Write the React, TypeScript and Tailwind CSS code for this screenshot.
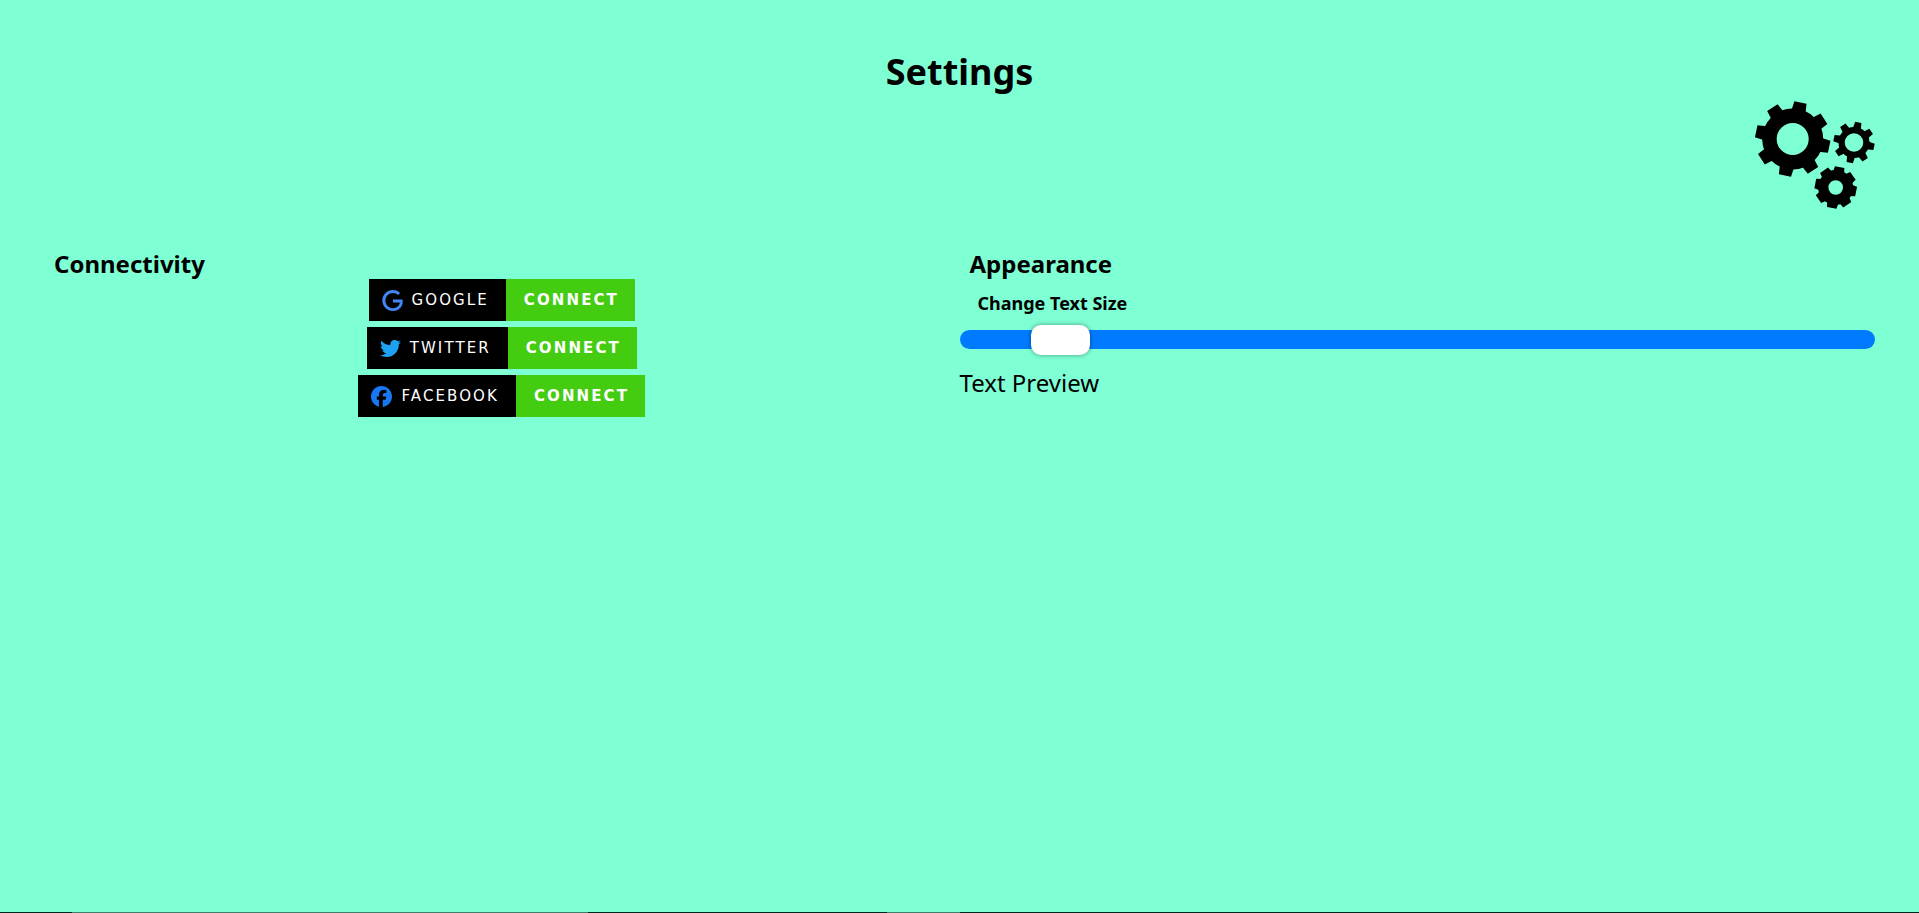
import { useState } from "react";
import { SiGoogle, SiFacebook } from "react-icons/si";
import { FaTwitter } from "react-icons/fa";
import type { ReactNode } from "react";

function Gear({ x, y, outer, body, hole, tooth, turn, teeth }: {
  x: number; y: number; outer: number; body: number; hole: number; tooth: number; turn: number; teeth: number;
}) {
  const angles = Array.from({ length: teeth }, (_, i) => turn + (i * 360) / teeth);
  const ring = (body + hole) / 2;
  return (
    <g transform={`translate(${x} ${y})`}>
      <circle r={ring} fill="none" stroke="black" strokeWidth={body - hole} />
      {angles.map((a) => (
        <path
          key={a}
          transform={`rotate(${a})`}
          d={`M${-tooth} ${-outer}H${tooth}L${tooth + 1} ${-body + 3}H${-tooth - 1}Z`}
        />
      ))}
    </g>
  );
}

function Badge({ icon, name }: { icon: ReactNode; name: string }) {
  return (
    <button type="button" className="flex h-[42px] cursor-pointer items-stretch font-['DejaVu_Sans',sans-serif] text-[15px] tracking-[0.14em] text-white uppercase">
      <span className="flex items-center gap-[9px] bg-black pr-[17px] pl-[13px]">
        {icon}
        {name}
      </span>
      <span className="flex items-center bg-[#4c1] pr-4 pl-[18px] font-bold">Connect</span>
    </button>
  );
}

export default function App() {
  const [size, setSize] = useState(24);
  return (
    <div className="flex min-h-screen flex-col bg-[#7fffd4] font-['Noto_Sans',sans-serif] text-black">
      <header className="px-11 pt-11">
        <h1 className="text-center text-4xl leading-[56px] font-bold">Settings</h1>
        <div className="flex h-[110px] justify-end">
          <svg viewBox="0 0 121 110" className="h-[110px] w-[121px]" aria-hidden="true">
            <Gear x={38.7} y={39} outer={37.3} body={30.5} hole={16} tooth={6.2} turn={12} teeth={8} />
            <Gear x={100} y={42.5} outer={20.5} body={15.5} hole={9.3} tooth={3.2} turn={12} teeth={8} />
            <Gear x={81.7} y={87.5} outer={20.8} body={17.5} hole={7.3} tooth={4.8} turn={11} teeth={8} />
          </svg>
        </div>
      </header>
      <main className="grid grow grid-cols-2 px-11 pt-[38px]">
        <section>
          <h2 className="px-2.5 text-2xl leading-[31px] font-bold">Connectivity</h2>
          <div className="flex flex-col items-center gap-1.5">
            <Badge name="Google" icon={<SiGoogle className="size-[21px] text-[#4285f4]" />} />
            <Badge name="Twitter" icon={<FaTwitter className="size-[21px] text-[#1da1f2]" />} />
            <Badge name="Facebook" icon={<SiFacebook className="size-[21px] text-[#1877f2]" />} />
          </div>
        </section>
        <section>
          <h2 className="px-2.5 text-2xl leading-[31px] font-bold">Appearance</h2>
          <label htmlFor="text-size" className="block px-[18px] pt-1 pb-1.5 text-lg leading-[41px] font-bold">
            Change Text Size
          </label>
          <input
            id="text-size"
            type="range"
            min={16}
            max={112}
            value={size}
            onChange={(e) => setSize(Number(e.target.value))}
            className="block h-[19px] w-full cursor-pointer appearance-none rounded-full bg-[#007bff] [&::-webkit-slider-thumb]:h-[30px] [&::-webkit-slider-thumb]:w-[59px] [&::-webkit-slider-thumb]:appearance-none [&::-webkit-slider-thumb]:rounded-[10px] [&::-webkit-slider-thumb]:bg-white [&::-webkit-slider-thumb]:shadow-[0_0_5px_rgba(0,0,0,0.4)]"
          />
          <p className="mt-4" style={{ fontSize: size }}>Text Preview</p>
        </section>
      </main>
      <footer className="flex h-px bg-[#00281f]">
        <div className="ml-[72px] w-[516px] bg-[#3f7f6a]" />
        <div className="ml-[299px] w-[73px] bg-[#3f7f6a]" />
      </footer>
    </div>
  );
}
